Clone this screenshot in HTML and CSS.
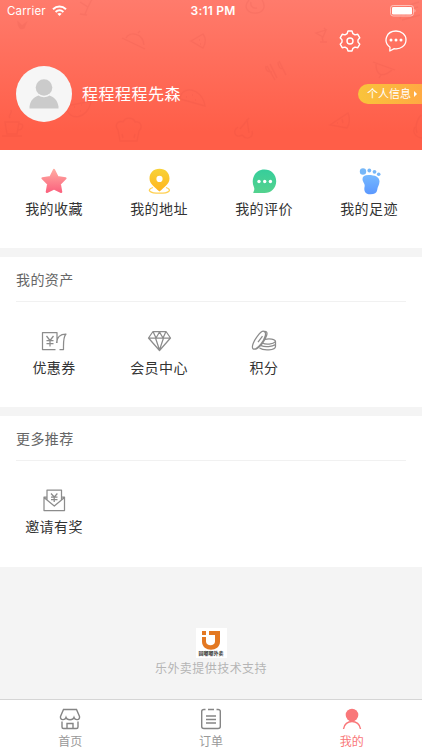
FILE: index.html
```
<!DOCTYPE html>
<html lang="zh-CN">
<head>
<meta charset="utf-8">
<meta name="viewport" content="width=device-width">
<title>我的</title>
<link rel="stylesheet" href="styles.css">
</head>
<body>
<div class="app">
  <header class="hero">
    <svg class="doodles" viewBox="0 0 422 150" fill="none" stroke="#c83a38" stroke-width="1.3">
      <path d="M80 2l8 5 4-8M88 7l-3 7M80 14l7 1"/>
      <path d="M18 22l4 4 4-3-2 5c-4 2-6-2-6-6z" fill="#c83a38"/>
      <path d="M122 38l23 11M126 38c4-7 17-5 18 7M138 33l2-2"/>
      <path d="M191 41l12-7c3 4 3 9 0 14zM199 40h1M200 44h1"/>
      <path d="M249 0c-7 8 0 14 8 13 7-1 9-7 5-13M251 2c-1 4 2 7 6 6"/>
      <path d="M316 33l10-3-3 7zM322 37l1 4M320 42h7M324 28l2 2"/>
      <path d="M267 66l8 14M270 64l7 14M279 61l7 14M266 66c-1 5 3 6 6 6M278 62c0 5 3 8 5 6"/>
      <path d="M373 62l22 8M376 64c0 10 5 15 16 6M381 75l-2 3"/>
      <path d="M400 19c2-9 7-14 19-17M402 20l18-5M405 16c3-5 7-8 13-9"/>
      <path d="M180 99c1-14 22-12 25 7zM186 97h1M192 95h1M195 100h1"/>
      <path d="M66 106c2 16 22 14 25-5zM74 107h1M81 105h1M80 111h1"/>
      <path d="M120 141l-2-11c-4-5 0-10 5-8 3-6 11-4 12 0 6-1 8 5 4 9l-2 10zM123 138l-1-4M134 138l1-4"/>
      <path d="M5 122h14l-2 12H7zM19 124c6-1 4 6-1 6M2 136h20M10 118c-3-3 3-4 1-8"/>
      <path d="M238 127c-6 4-3 12 4 8 5 6 12 2 10-4M240 129l9-11M247 119l2 14"/>
      <path d="M330 125l18-12c2 5 2 10-1 15zM342 119l1 4M337 123h1"/>
      <path d="M421 115c-5 6-6 12-4 18M415 127c-3 5 0 10 7 11"/>
    </svg>
    <div class="status">
      <div class="carrier">Carrier
        <svg width="15" height="12" viewBox="0 0 15 12" fill="none" stroke="#fff" stroke-width="2"><path d="M1 4.2c3.8-3.5 9.2-3.5 13 0M3.600 7c2.300-2 5.500-2 7.800 0"/><path d="M5.300 8.800c1.300-1 3.100-1 4.400 0L7.500 11z" fill="#fff" stroke="none"/></svg>
      </div>
      <time>3:11 PM</time>
      <svg class="battery" width="26" height="12" viewBox="0 0 26 12"><rect x=".5" y=".5" width="23" height="10.500" rx="2.700" fill="none" stroke="#ffc0b9"/><rect x="2" y="2" width="20" height="7.500" rx="1.300" fill="#fff"/><path d="M24.500 4c1.300.5 1.300 3 0 3.500z" fill="#ffc0b9"/></svg>
    </div>
    <div class="actions">
      <svg width="22" height="22" viewBox="0 0 22 22" fill="none" stroke="#fff" stroke-width="1.400" stroke-linejoin="round"><path d="M9 1h4l.9 2.700 2.100 1.200 2.800-.6 2 3.500L19 9.900v2.200l1.800 2.100-2 3.500-2.800-.6-2.100 1.200L13 21H9l-.9-2.700L6 17.100l-2.800.6-2-3.500L3 12.100V9.900L1.200 7.800l2-3.500 2.800.6 2.100-1.200z"/><circle cx="11" cy="11" r="3"/></svg>
      <svg width="22" height="22" viewBox="0 0 22 22" fill="none" stroke="#fff" stroke-width="1.300" stroke-linejoin="round"><path d="M5 17.200C-2.500 11.500 1.500 1 11 1c5.600 0 10 3.700 10 8.700 0 6-5.500 10-11.800 8.900L4.800 21z"/><g fill="#fff" stroke="none"><circle cx="6" cy="10" r="1.500"/><circle cx="11" cy="10" r="1.500"/><circle cx="16" cy="10" r="1.500"/></g></svg>
    </div>
    <div class="profile">
      <div class="avatar"><svg width="30" height="30" viewBox="0 0 30 30" fill="#cbcbcb"><circle cx="15" cy="8.500" r="8.300"/><path d="M.5 29.500v-2C1.500 21 5 18 9.500 16.500c3.500 2.300 7.500 2.300 11 0C25 18 28.500 21 29.500 27.500v2z"/></svg></div>
      <div class="name">程程程程先森</div>
      <div class="info">个人信息<i></i></div>
    </div>
  </header>

  <section class="grid shortcuts">
    <div class="tile">
      <svg width="28" height="28" viewBox="0 0 28 28"><defs><linearGradient id="pink" x2="0" y2="1"><stop stop-color="#ffa9a0"/><stop offset="1" stop-color="#fb637e"/></linearGradient></defs><path d="M14 3l3.500 7 8 1.300-5.700 5.600 1.400 8L14 21.500l-7.200 3.400 1.400-8-5.700-5.600 8-1.300z" fill="url(#pink)" stroke="url(#pink)" stroke-width="2.200" stroke-linejoin="round"/></svg>
      <span>我的收藏</span>
    </div>
    <div class="tile">
      <svg width="28" height="28" viewBox="0 0 28 28"><defs><linearGradient id="gold" x2="0" y2="1"><stop stop-color="#f8d237"/><stop offset="1" stop-color="#ffb51d"/></linearGradient></defs><path d="M8 20.500c-7 2.200-3.500 5.700 6.500 5.700s13-3.500 6.500-5.700" fill="none" stroke="#ffd052" stroke-width="1.300"/><path fill-rule="evenodd" d="M14.500 1.800c6 0 10 4.200 10 9.700 0 5.300-5 8.600-10 13-5-4.400-10-7.700-10-13 0-5.500 4-9.700 10-9.700zm0 7a3.100 3.100 0 1 0 0 6.200 3.100 3.100 0 0 0 0-6.200z" fill="url(#gold)"/></svg>
      <span>我的地址</span>
    </div>
    <div class="tile">
      <svg width="28" height="28" viewBox="0 0 28 28"><defs><linearGradient id="green" x2="0" y2="1"><stop stop-color="#36ce9b"/><stop offset="1" stop-color="#54d28e"/></linearGradient></defs><path d="M14.500 2.500c6.500 0 11.700 4.700 11.700 11.700S21 26 14.500 26H4c-.8 0-1-.6-.4-1.300 1-1.500.9-3.500.2-5C.5 12 5 2.500 14.500 2.500z" fill="url(#green)"/><g fill="#fff"><circle cx="9" cy="14.500" r="1.700"/><circle cx="14.700" cy="14.500" r="1.700"/><circle cx="20.400" cy="14.500" r="1.700"/></g></svg>
      <span>我的评价</span>
    </div>
    <div class="tile">
      <svg width="28" height="28" viewBox="0 0 28 28"><defs><linearGradient id="blue" x2="0" y2="1"><stop stop-color="#76b9ff"/><stop offset="1" stop-color="#5b98ff"/></linearGradient></defs><g fill="#76b7f8"><circle cx="8" cy="4.500" r="3.200"/><circle cx="14.300" cy="3.500" r="1.900"/><circle cx="19.500" cy="4.800" r="1.900"/><circle cx="23.700" cy="7.300" r="1.800"/></g><path d="M7.500 12c0-2.800 2-4 6-4 6.500 0 11 2 11 6.500-.2 3.700-2 5.300-2.300 8.500-.5 3-2.700 4.300-6.700 4.300-5.500 0-7-3.500-5.800-8.300.3-2.500-2.200-4-2.200-7z" fill="url(#blue)"/></svg>
      <span>我的足迹</span>
    </div>
  </section>

  <section class="panel">
    <h2>我的资产</h2>
    <div class="grid">
      <div class="tile line">
        <svg width="28" height="28" viewBox="0 0 28 28"><path d="M15.500 22.500H2.500V5.500h14.500v10.500M16.500 16c.3-5 2.500-9 9.500-9-3 3-2.500 8-2.500 15.500h-4M6.500 9l3.500 4.500L13.500 9M6.500 13.500h7M6.500 16.500h7M10 13.500v6"/></svg>
        <span>优惠券</span>
      </div>
      <div class="tile line">
        <svg width="28" height="28" viewBox="0 0 28 28"><path d="M8 4.500h13l4.500 6.500-11 12.500L3.500 11zM3.500 11h22M8 4.500l3 6.500 3.500-6 3.500 6 3-6.500M10.500 11l4 12 4-12"/></svg>
        <span>会员中心</span>
      </div>
      <div class="tile line">
        <svg width="28" height="28" viewBox="0 0 28 28"><path d="M13.800 4.300c3.500.8 1.200 7.500-2.800 12.500-3 3.800-6.500 6.500-8 5-1.800-2 .8-8 4.300-12.500 2.300-3 4.700-5.500 6.500-5zM14 4.300c2.800-.3 3.600 1.500 2.500 4.500-.8 2.500-2.500 5.700-5 8.700-2.500 2.800-5 5-7.500 4.700M8 15l4.500-6M15 12.500c4-1.500 10.500-.3 10.500 2v5c0 4-12 4.500-16 1.500M12.500 16c3 1.800 10.500 1.500 13-1.300M11 18.700c4.500 1.700 11 1 14.500-1.200"/></svg>
        <span>积分</span>
      </div>
    </div>
  </section>

  <section class="panel last">
    <h2>更多推荐</h2>
    <div class="grid">
      <div class="tile line">
        <svg width="28" height="28" viewBox="0 0 28 28"><path d="M7 11H4v13.500h20.500V11h-3M7 14V4h14.500v10l-7.200 6zM4 11.500l3 2.500M24.500 11.500l-3 2.500M11 7.500l3.200 3.500 3.200-3.500M11 11h6.500M11 13.500h6.500M14.200 11v5"/></svg>
        <span>邀请有奖</span>
      </div>
    </div>
  </section>

  <footer class="support">
    <div class="brand">
      <svg width="20" height="20" viewBox="0 0 20 20" fill="#e37822"><path d="M1 1h4v4H1zM1 7h4v4.500c0 5 9 5 9 0V5H8V1h11v10.500c0 11-18 11-18 0z"/></svg>
      <b>园嘟嘟外卖</b>
    </div>
    <p>乐外卖提供技术支持</p>
  </footer>

  <nav class="tabs">
    <div class="tab">
      <svg width="22" height="22" viewBox="0 0 22 22" fill="none" stroke="#858585" stroke-width="1.400"><path d="M4.500 1.500h13l3 7c.7 4-4.500 4-5.500 1-1 3-7 3-8 0-1 3-6.200 3-5.500-1zM3 13.500v5.500q0 1.500 1.500 1.500h13q1.500 0 1.500-1.500v-5.500M8 20v-4.500h6v4.500"/></svg>
      <span>首页</span>
    </div>
    <div class="tab">
      <svg width="22" height="22" viewBox="0 0 22 22" fill="none" stroke="#858585" stroke-width="1.400"><path d="M5.500 1.500H4q-2.300 0-2.300 2v15q0 2 2.300 2h14q2.300 0 2.300-2v-15q0-2-2.300-2h-1.500M8 1.500h6M6 8h10M6 11.500h10M6 15h10"/></svg>
      <span>订单</span>
    </div>
    <div class="tab active">
      <svg width="22" height="22" viewBox="0 0 22 22"><circle cx="11" cy="7" r="6.300" fill="#f97779"/><path d="M2.500 21c1-10 16-10 17 0" fill="none" stroke="#f97779" stroke-width="1.400"/></svg>
      <span>我的</span>
    </div>
  </nav>
</div>
</body>
</html>
```
FILE: styles.css
```
* { box-sizing: border-box; }
body { margin: 0; font-family: "Liberation Sans", "Noto Sans CJK SC", sans-serif; color: #333; }
svg { display: block; flex: none; }
.app { width: 422px; height: 750px; display: flex; flex-direction: column; background: #f4f4f4; overflow: hidden; }

.hero { height: 150px; flex: none; position: relative; isolation: isolate; background: linear-gradient(#ff7b6c, #ff5e48 88%); color: #fff; }
.doodles { position: absolute; z-index: -1; inset: 0; width: 422px; height: 150px; opacity: .09; }
.status { height: 22px; padding: 0 7px; display: grid; grid-template-columns: 1fr auto 1fr; align-items: center; font: 12px/22px Inter, sans-serif; }
.carrier { display: flex; align-items: center; gap: 6px; font-size: 11.5px; letter-spacing: .15px; }
.status time { font-weight: 600; letter-spacing: .2px; padding-left: 4px; }
.battery { justify-self: end; margin-right: -1px; }
.actions { display: flex; justify-content: flex-end; align-items: center; gap: 24px; padding: 8px 15px 0 0; }
.profile { display: flex; align-items: center; height: 56px; margin-top: 14px; padding-left: 15.5px; }
.avatar { width: 56px; height: 56px; border-radius: 50%; background: #f6f6f6; display: flex; align-items: center; justify-content: center; padding-bottom: 1px; }
.name { margin: 2px 0 0 10.500px; font-size: 16px; letter-spacing: .5px; line-height: 24px; font-weight: 400; }
.info { margin-left: auto; width: 64px; height: 20px; border-radius: 10px 0 0 10px; background: linear-gradient(90deg, #f9c43b, #ffa943); font-size: 11px; line-height: 21px; padding-left: 9px; display: flex; align-items: center; gap: 3px; }
.info i { border: 3px solid transparent; border-left-color: #fff; border-right: 0; }

.grid { display: grid; grid-template-columns: repeat(4, 105px); padding-left: 1.5px; }
.shortcuts { height: 98px; flex: none; background: #fff; padding-top: 17px; }
.tile { display: flex; flex-direction: column; align-items: center; }
.tile span { font-size: 14px; line-height: 22px; letter-spacing: .4px; margin-top: 3px; }
.line svg { fill: none; stroke: #8c8c8c; stroke-width: 1.25; stroke-linejoin: round; }
.line span { margin-top: 2px; }

.panel { height: 150px; flex: none; margin-top: 9px; background: #fff; }
.last { height: 151px; }
.panel h2 { margin: 0 16px; height: 45px; border-bottom: 1px solid #f1f1f1; font-size: 14px; line-height: 46px; font-weight: 400; letter-spacing: .4px; color: #666; }
.panel .grid { padding-top: 25px; }

.support { flex: 1; display: flex; flex-direction: column; align-items: center; padding-top: 61px; }
.brand { width: 31px; height: 30px; background: #fff; display: flex; flex-direction: column; align-items: center; padding-top: 2px; }
.brand b { font-size: 5px; line-height: 7px; color: #333; white-space: nowrap; }
.support p { margin: 1px 0 0; font-size: 12px; line-height: 20px; letter-spacing: .45px; color: #b5b5b5; }

.tabs { height: 51px; flex: none; border-top: 1px solid #d5d5d5; background: #fff; display: grid; grid-template-columns: repeat(3, 1fr); padding-top: 8px; }
.tab { display: flex; flex-direction: column; align-items: center; font-size: 12px; line-height: 18px; color: #999; gap: 3px; }
.active { color: #f97779; }
```
